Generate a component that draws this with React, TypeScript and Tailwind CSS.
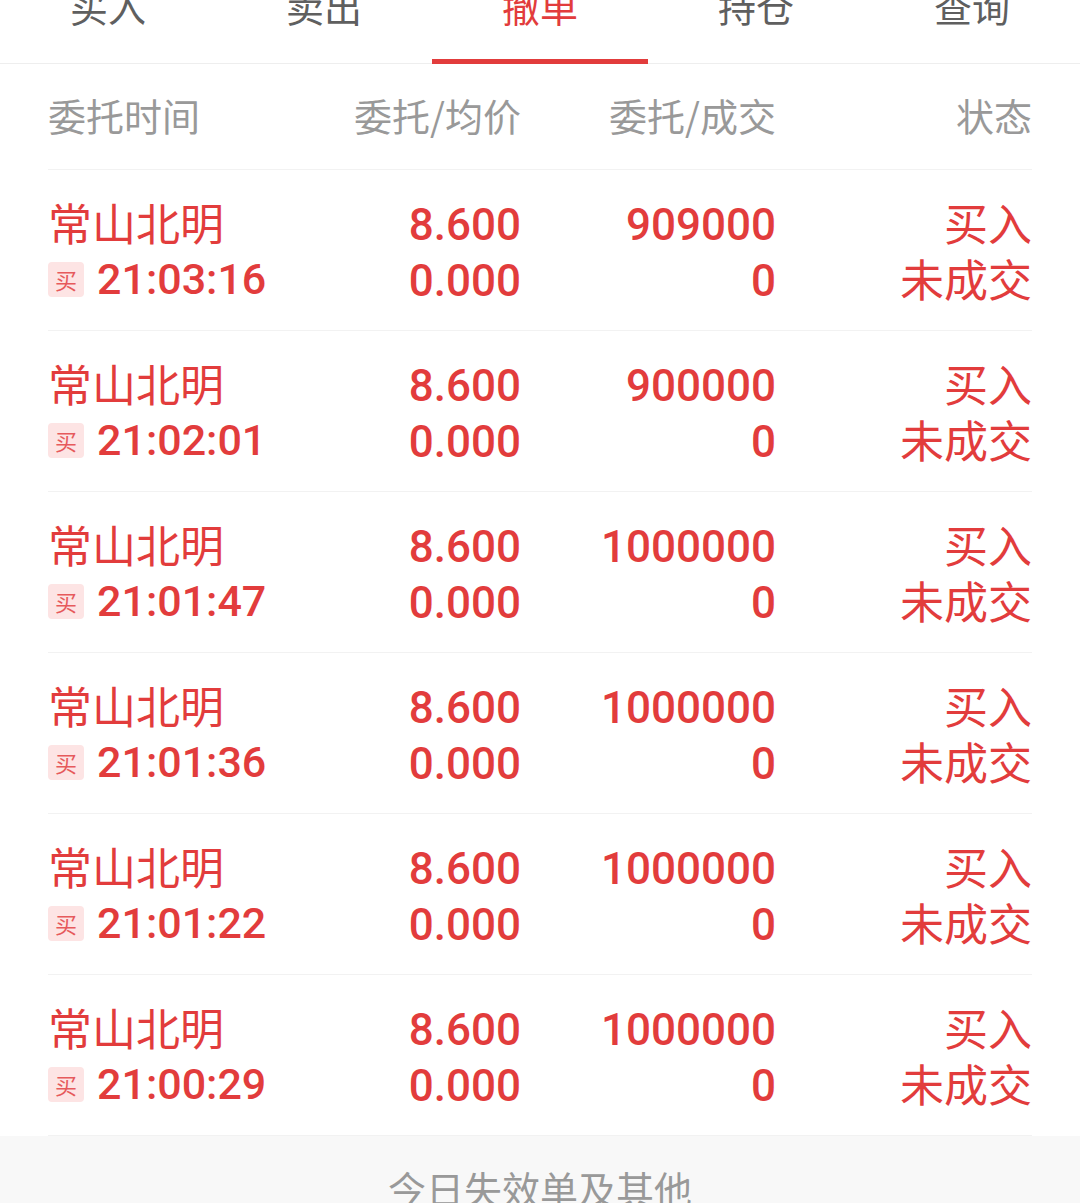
import React from 'react';

const tabs = ['买入', '卖出', '撤单', '持仓', '查询'];

const orders = [
    { name: '常山北明', time: '21:03:16', price: '8.600', avg: '0.000', qty: '909000', deal: '0' },
    { name: '常山北明', time: '21:02:01', price: '8.600', avg: '0.000', qty: '900000', deal: '0' },
    { name: '常山北明', time: '21:01:47', price: '8.600', avg: '0.000', qty: '1000000', deal: '0' },
    { name: '常山北明', time: '21:01:36', price: '8.600', avg: '0.000', qty: '1000000', deal: '0' },
    { name: '常山北明', time: '21:01:22', price: '8.600', avg: '0.000', qty: '1000000', deal: '0' },
    { name: '常山北明', time: '21:00:29', price: '8.600', avg: '0.000', qty: '1000000', deal: '0' },
];

const cjk = "font-['Noto_Sans_CJK_SC','Noto_Sans',sans-serif]";
const num = "font-['Roboto','Noto_Sans_CJK_SC',sans-serif] font-medium";
const grid = 'grid grid-cols-[252px_221px_255px_256px]';

function App() {
    return (
        <div className={`w-[1080px] h-[1203px] overflow-hidden bg-white ${cjk}`}>
            {/* tab bar, scrolled so the labels are cut at the top */}
            <div className="flex h-[64px] border-b border-[#eeeeee]">
                {tabs.map((t, i) => (
                    <div key={t} className="relative flex-1 flex justify-center">
                        <span
                            className={`-mt-[16px] text-[38px] leading-[44px] ${i === 2 ? 'text-[#e23c3c]' : 'text-[#5f5f5f]'}`}
                        >
                            {t}
                        </span>
                        {i === 2 && <div className="absolute left-0 right-0 -bottom-[1px] h-[5px] bg-[#e23c3c]" />}
                    </div>
                ))}
            </div>

            <div className="px-[48px]">
                <div className={`${grid} h-[106px] items-center border-b border-[#f2f2f2] text-[38px] text-[#999999]`}>
                    <span className="pb-[4px]">委托时间</span>
                    <span className="text-right pb-[4px]">委托/均价</span>
                    <span className="text-right pb-[4px]">委托/成交</span>
                    <span className="text-right pb-[4px]">状态</span>
                </div>

                {orders.map((o, i) => (
                    <div
                        key={i}
                        className={`${grid} pt-[27px] pb-[21px] border-b border-[#f2f2f2] text-[44px] leading-[56px] text-[#e23c3c]`}
                    >
                        <div className="flex flex-col">
                            <span className="-mt-[3px] pb-[3px]">{o.name}</span>
                            <div className="flex items-center gap-[13px] -mt-[2px] pb-[2px]">
                                <span className="w-[36px] h-[35px] rounded-[4px] bg-[#fde4e4] text-[#e65a5c] text-[22px] leading-[35px] text-center">
                                    买
                                </span>
                                <span className={`${num} text-[43px]`}>{o.time}</span>
                            </div>
                        </div>
                        <div className={`flex flex-col items-end ${num}`}>
                            <span>{o.price}</span>
                            <span>{o.avg}</span>
                        </div>
                        <div className={`flex flex-col items-end ${num}`}>
                            <span>{o.qty}</span>
                            <span>{o.deal}</span>
                        </div>
                        <div className="flex flex-col items-end -mt-[3px] pb-[3px]">
                            <span>买入</span>
                            <span>未成交</span>
                        </div>
                    </div>
                ))}
            </div>

            <div className="bg-[#f8f8f8] h-[120px] pt-[30px] text-center text-[38px] leading-[44px] text-[#999999]">
                今日失效单及其他
            </div>
        </div>
    );
}

export default App;
